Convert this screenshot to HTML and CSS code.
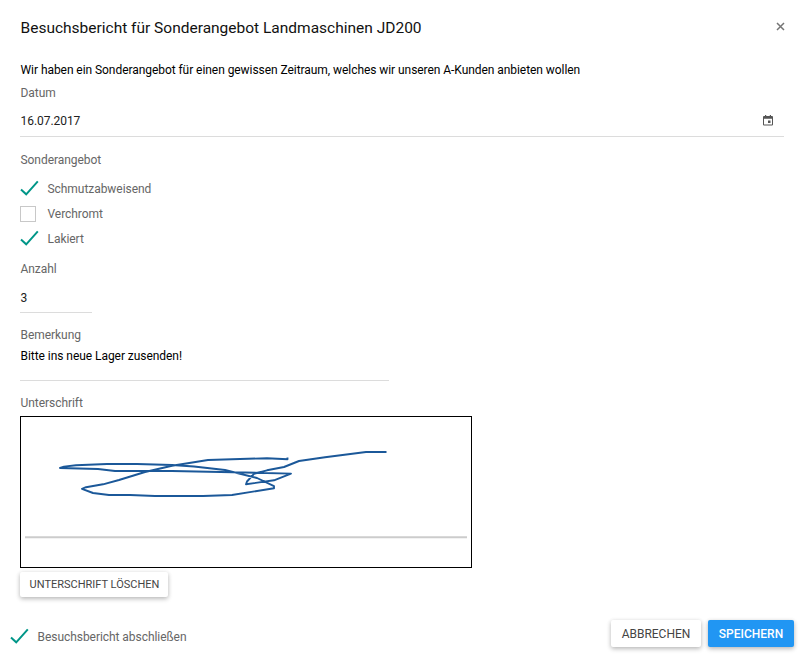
FILE: index.html
```html
<!DOCTYPE html>
<html lang="de">
<head>
<meta charset="utf-8">
<title>Besuchsbericht</title>
<link rel="stylesheet" href="styles.css">
</head>
<body>
<div class="dialog">
  <header class="header">
    <h1 class="title">Besuchsbericht für Sonderangebot Landmaschinen JD200</h1>
    <button class="close" aria-label="Schließen"><svg width="9" height="9" viewBox="0 0 9 9"><path d="M1 1l7 7M8 1l-7 7"/></svg></button>
  </header>
  <main class="content">
    <p class="intro"><span>Wir haben ein Sonderangebot für einen gewissen Zeitraum, welches wir unseren A-Kunden anbieten wollen</span></p>
    <div class="label label-date">Datum</div>
    <div class="field field-date"><span>16.07.2017</span>
      <svg class="calendar" width="10" height="11" viewBox="0 0 10 11"><path fill-rule="evenodd" d="M1 1h1V0h1.200v1h3.600V0H8v1h1q1 0 1 1v7.500q0 1-1 1H1q-1 0-1-1V2q0-1 1-1zM1 3.700v5.700h8V3.700zM5 5.500h2.500v2.500H5z"/></svg>
    </div>
    <div class="label label-offer">Sonderangebot</div>
    <div class="options">
      <div class="option"><svg class="check" width="20" height="18" viewBox="0 0 20 18"><path d="M1 9.500L6.200 14.300L17.800 1.300"/></svg><span class="option-text">Schmutzabweisend</span></div>
      <div class="option"><span class="box"></span><span class="option-text">Verchromt</span></div>
      <div class="option"><svg class="check" width="20" height="18" viewBox="0 0 20 18"><path d="M1 9.500L6.200 14.300L17.800 1.300"/></svg><span class="option-text">Lakiert</span></div>
    </div>
    <div class="label label-count">Anzahl</div>
    <div class="field field-count">3</div>
    <div class="label label-note">Bemerkung</div>
    <div class="field field-note"><span>Bitte ins neue Lager zusenden!</span></div>
    <div class="label label-sign">Unterschrift</div>
    <div class="signature">
      <svg width="450" height="150" viewBox="21 417 450 150">
        <path class="baseline" d="M25 537.300H467"/>
        <path class="ink" d="M287.500 457.500V459.300L267 458.200L208 460L172 465.800L145 472L119 480L103 484.300L86 487.200L82 488.800L93 493L109 495L130 495L155 496L203 496L232 495L274 488.200V486.200L257 478L225 470L194 466.500L172 465L137 464L107 464L76 465.300L64 466.600L60 468L98 469L115 471L172 471L245 472.500L291 473.600L274 480.300L246 484.300L247 481.500L254 473.800L267 470.300L284 467L299 461L325 457.300L366 452H386.500"/>
      </svg>
    </div>
    <button class="button button-clear"><span>UNTERSCHRIFT LÖSCHEN</span></button>
  </main>
  <footer class="footer">
    <div class="option done"><svg class="check" width="20" height="18" viewBox="0 0 20 18"><path d="M1 9.500L6.200 14.300L17.800 1.300"/></svg><span class="option-text">Besuchsbericht abschließen</span></div>
    <div class="actions">
      <button class="button button-cancel"><span>ABBRECHEN</span></button>
      <button class="button button-save"><span>SPEICHERN</span></button>
    </div>
  </footer>
</div>
</body>
</html>
```
FILE: styles.css
```css
* { box-sizing: border-box; }
body {
  margin: 0;
  background: #fff;
  font: 12px/20px Roboto, "Liberation Sans", sans-serif;
  letter-spacing: -.05px;
  color: #212121;
}
.dialog { display: flex; flex-direction: column; height: 661px; }
.header {
  display: flex;
  justify-content: space-between;
  height: 60px;
  padding: 18px 17px 0 20.5px;
}
.title { margin: 0; font-size: 15.5px; font-weight: 400; line-height: 20px; letter-spacing: 0; color: #111; }
.close { width: 12px; height: 16px; padding: 0; border: 0; background: none; display: flex; align-items: center; justify-content: center; }
.close svg { fill: none; stroke: #757575; stroke-width: 1.5; }
.content { padding: 0 19px 0 20px; }
.intro { margin: 0; padding-left: .5px; color: #000; letter-spacing: -.058px; }
.label { padding-left: .5px; color: #666; }
.label-date { margin-top: 3px; }
.field { padding-left: .5px; color: #212121; border-bottom: 1px solid #dcdcdc; }
.field-date { display: flex; justify-content: space-between; align-items: center; height: 34px; padding: 3px 11px 0 .5px; }
.calendar { margin-bottom: 2px; fill: #555; }
.label-offer { margin-top: 13px; }
.options { padding-top: 6px; }
.option { display: flex; align-items: center; height: 25px; color: #666; }
.check { width: 20px; height: 18px; flex: none; fill: none; stroke: #009688; stroke-width: 2; }
.box { width: 16px; height: 16px; margin-right: 4px; border: 1px solid #c8c8c8; }
.option-text { margin-left: 7.5px; }
.label-count { margin-top: 8px; }
.field-count { width: 72px; height: 34px; padding-top: 9px; }
.label-note { margin-top: 12px; }
.field-note { width: 369px; height: 36px; padding-top: 1px; color: #000; }
.label-sign { margin-top: 12px; }
.signature { width: 452px; height: 152px; margin-top: 3px; border: 1px solid #000; }
.signature svg { display: block; fill: none; }
.baseline { stroke: #ccc; stroke-width: 2; }
.ink { stroke: #1b5899; stroke-width: 1.9; stroke-linejoin: round; }
.button {
  padding: 0;
  border: 0;
  border-radius: 2px;
  background: #fff;
  color: #444;
  font-family: inherit;
  font-size: 12px;
  box-shadow: 0 2px 5px rgba(0, 0, 0, .2), 0 1px 4px rgba(0, 0, 0, .12);
}
.button-clear { display: block; width: 148px; height: 25px; margin-top: 4px; padding-left: 1px; font-size: 11px; }
.footer { display: flex; justify-content: space-between; margin-top: 23px; padding: 0 9px 0 10px; }
.done { height: 33px; }
.actions { display: flex; gap: 7px; }
.button-cancel { width: 90px; height: 27px; }
.button-save { width: 86px; height: 27px; background: #2196f3; color: #fff; font-weight: 500; }
```
